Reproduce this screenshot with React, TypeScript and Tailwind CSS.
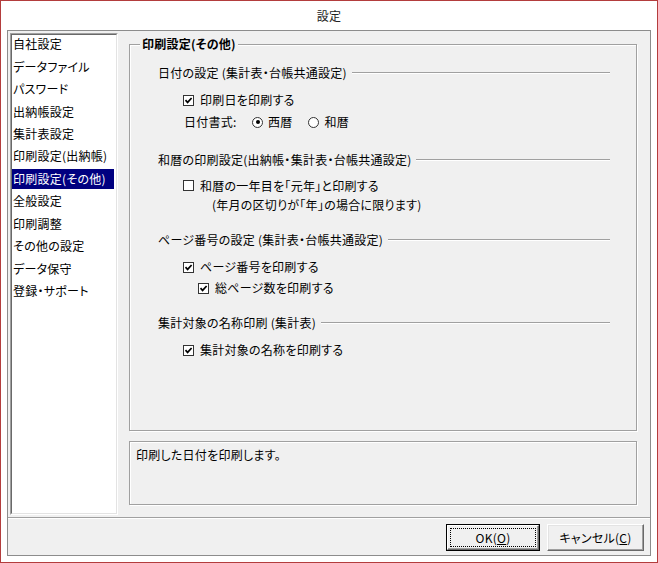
import React from "react";

const FONT = "font-['Noto_Sans_CJK_JP','Noto_Sans',sans-serif] [font-feature-settings:'palt'] tracking-[0.25px]";

function Check({ checked }: { checked: boolean }) {
  return (
    <span className="w-[11px] h-[11px] border border-[#333333] bg-white flex items-center justify-center shrink-0">
      {checked && (
        <svg width="9" height="9" viewBox="0 0 9 9">
          <path d="M1.5 4.2 L3.6 6.4 L7.6 2" stroke="#000" strokeWidth="1.7" fill="none" />
        </svg>
      )}
    </span>
  );
}

function Radio({ checked }: { checked: boolean }) {
  return (
    <span className="w-[11px] h-[11px] rounded-full border border-[#333333] bg-white flex items-center justify-center shrink-0">
      {checked && <span className="w-[4px] h-[4px] rounded-full bg-black" />}
    </span>
  );
}

function Section({ label, className }: { label: string; className: string }) {
  return (
    <div className={`h-[20px] flex items-center ${className}`}>
      <span className="whitespace-nowrap leading-none">{label}</span>
      <div className="flex-1 ml-[5px] border-t border-t-[#a0a0a0] border-b border-b-white" />
    </div>
  );
}

function CheckRow({ label, className, checked = true }: { label: string; className: string; checked?: boolean }) {
  return (
    <div className={`h-[20px] flex items-center ${className}`}>
      <Check checked={checked} />
      <span className="ml-[6px] whitespace-nowrap leading-none">{label}</span>
    </div>
  );
}

const items = [
  "自社設定",
  "データファイル",
  "パスワード",
  "出納帳設定",
  "集計表設定",
  "印刷設定(出納帳)",
  "印刷設定(その他)",
  "全般設定",
  "印刷調整",
  "その他の設定",
  "データ保守",
  "登録・サポート",
];

export default function App() {
  return (
    <div className={`w-[658px] h-[563px] border border-[#b33d3d] bg-white flex flex-col text-[12px] text-black ${FONT}`}>
      <div className="h-[29px] flex items-center justify-center leading-none text-[#222]">設定</div>
      <div className="flex-1 mx-[6px] mb-[6px] border border-[#8c8c8c] bg-[#f0f0f0] flex flex-col">
        <div className="h-[486px] flex">
          {/* list */}
          <div className="ml-[2px] mt-[2px] w-[108px] h-[482px] border-t border-l border-t-[#a0a0a0] border-l-[#a0a0a0] border-r border-b border-r-white border-b-white">
            <div className="w-full h-full border-t border-l border-t-[#696969] border-l-[#696969] border-r border-b border-r-[#e3e3e3] border-b-[#e3e3e3] bg-white">
              <div className="flex flex-col mt-[-2px]">
                {items.map((it) => {
                  const sel = it === "印刷設定(その他)";
                  return (
                    <div key={it} className="h-[22.45px] flex items-center">
                      <div
                        className={`h-[20px] w-full mr-[2px] flex items-center pl-[1px] leading-none whitespace-nowrap ${
                          sel ? "bg-[#000080] text-white" : ""
                        }`}
                      >
                        {it}
                      </div>
                    </div>
                  );
                })}
              </div>
            </div>
          </div>

          {/* right pane */}
          <div className="ml-[11px] flex flex-col">
            <div className="relative mt-[13px] w-[508px] h-[387px] border border-[#a0a0a0] shadow-[inset_1px_1px_0_white,1px_1px_0_white]">
              <div className="absolute left-[10px] top-[-9px] px-[2px] bg-[#f0f0f0] font-bold leading-[16px]">
                印刷設定(その他)
              </div>
              <div className="flex flex-col pl-[28px] pr-[26px]">
                <Section label="日付の設定 (集計表・台帳共通設定)" className="mt-[18px]" />
                <CheckRow label="印刷日を印刷する" className="mt-[7px] pl-[25px]" />
                <div className="h-[20px] mt-[2px] pl-[26px] flex items-center leading-none">
                  <span className="w-[68px] whitespace-nowrap">日付書式:</span>
                  <Radio checked />
                  <span className="ml-[5px]">西暦</span>
                  <span className="ml-[15px] flex items-center">
                    <Radio checked={false} />
                    <span className="ml-[6px]">和暦</span>
                  </span>
                </div>
                <Section label="和暦の印刷設定(出納帳・集計表・台帳共通設定)" className="mt-[18px]" />
                <div className="h-[19px] mt-[6px] pl-[25px] flex items-center">
                  <Check checked={false} />
                  <span className="ml-[6px] whitespace-nowrap leading-none">和暦の一年目を「元年」と印刷する</span>
                </div>
                <div className="h-[19px] pl-[54px] flex items-center leading-none whitespace-nowrap">
                  (年月の区切りが「年」の場合に限ります)
                </div>
                <Section label="ページ番号の設定 (集計表・台帳共通設定)" className="mt-[16px]" />
                <CheckRow label="ページ番号を印刷する" className="mt-[7px] pl-[25px]" />
                <CheckRow label="総ページ数を印刷する" className="mt-[1px] pl-[40px]" />
                <Section label="集計対象の名称印刷 (集計表)" className="mt-[15px]" />
                <CheckRow label="集計対象の名称を印刷する" className="mt-[7px] pl-[25px]" />
              </div>
            </div>
            <div className="mt-[10px] w-[508px] h-[64px] border border-[#a0a0a0] shadow-[inset_1px_1px_0_white,1px_1px_0_white] pl-[6px] pt-[4px]">
              <span className="leading-[14px]">印刷した日付を印刷します。</span>
            </div>
          </div>
        </div>

        {/* separator */}
        <div className="border-t border-t-[#a0a0a0] border-b border-b-white" />

        {/* buttons */}
        <div className="flex-1 flex justify-end items-start pt-[5px] pr-[6px] gap-[7px]">
          <div className="w-[94px] h-[27px] border border-black">
            <div className="w-full h-full border-t border-l border-t-white border-l-white border-r border-b border-r-[#696969] border-b-[#696969] shadow-[inset_-1px_-1px_0_#a0a0a0] p-[2px]">
              <div className="w-full h-full border border-dotted border-black flex items-center justify-center leading-none">
                OK(<span className="underline">O</span>)
              </div>
            </div>
          </div>
          <div className="w-[97px] h-[27px] border-t border-l border-t-white border-l-white border-r border-b border-r-[#696969] border-b-[#696969] shadow-[inset_-1px_-1px_0_#a0a0a0,inset_1px_1px_0_#e3e3e3] flex items-center justify-center leading-none">
            キャンセル(<span className="underline">C</span>)
          </div>
        </div>
      </div>
    </div>
  );
}
